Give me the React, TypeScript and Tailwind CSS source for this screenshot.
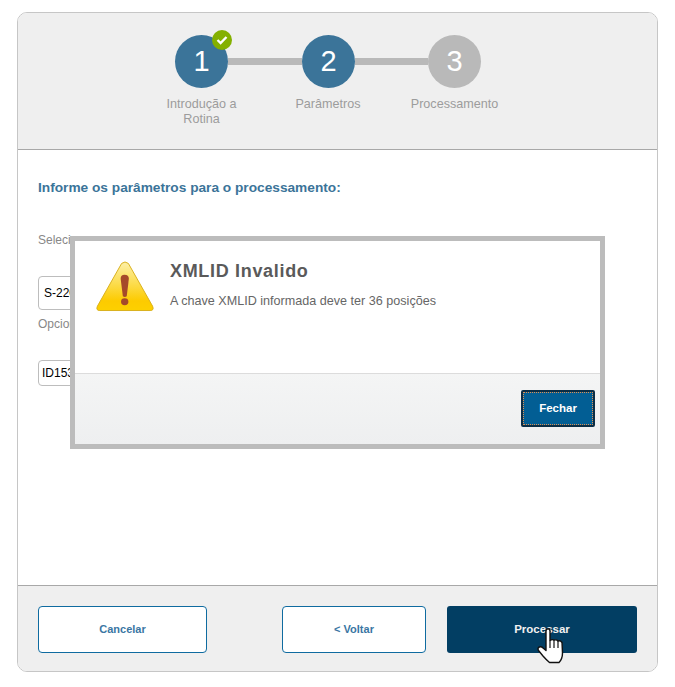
import React from "react";

const font = "font-['Liberation_Sans',Arial,sans-serif]";

function WarningIcon() {
  return (
    <svg width="58" height="51" viewBox="0 0 60 52" preserveAspectRatio="none">
      <defs>
        <linearGradient id="warn" x1="0" y1="0" x2="0" y2="1">
          <stop offset="0" stopColor="#fdf0a8" />
          <stop offset="0.45" stopColor="#fcdc4c" />
          <stop offset="0.8" stopColor="#fdcb00" />
          <stop offset="1" stopColor="#fdd000" />
        </linearGradient>
      </defs>
      <path
        d="M26.5 2.5 Q30 -0.5 33.5 2.5 L58.5 46 Q60.5 50.5 56 50.5 L4 50.5 Q-0.5 50.5 1.5 46 Z"
        fill="url(#warn)"
        stroke="#d9b01c"
        strokeWidth="1"
      />
      <path d="M25.5 18 Q25.5 14 29.5 14 Q34 14 34 18 L31.8 36 Q29.7 37.5 27.8 36 Z" fill="#a5492a" />
      <ellipse cx="29.7" cy="41.5" rx="3.8" ry="3.5" fill="#a5492a" />
    </svg>
  );
}

function HandCursor() {
  return (
    <svg width="30" height="36" viewBox="0 0 30 36">
      <path
        d="M9 3 Q9 0.8 11 0.8 Q13 0.8 13 3 L13 12.5 Q15.5 11 17 12.2 Q19.5 11.2 21 13 Q23.5 12.3 25 14.5 L25.5 25 Q25.5 31 22 34.5 L12.5 34.5 Q9.5 32 6 28 L1.5 22.5 Q0.2 20 2.3 19 Q4.3 18.3 6 20 L9 22.5 Z"
        fill="#fff"
        stroke="#111"
        strokeWidth="1.4"
        strokeLinejoin="round"
      />
      <path d="M13 12.5 L13 20 M17 12.2 L17 20 M21 13 L21 20" stroke="#111" strokeWidth="1.2" fill="none" />
    </svg>
  );
}

function Circle({ n, done, off }: { n: number; done?: boolean; off?: boolean }) {
  return (
    <div
      className={
        "relative flex h-[53px] w-[53px] shrink-0 items-center justify-center rounded-full text-[29px] text-white " +
        (off ? "bg-[#b9b9b9]" : "bg-[#3b7499]")
      }
    >
      {n}
      {done && (
        <div className="absolute right-[-4px] top-[-5px] flex h-[20px] w-[20px] items-center justify-center rounded-full bg-[#84b000]">
          <svg width="12" height="10" viewBox="0 0 12 10">
            <path d="M1.5 5 L4.6 8 L10.5 2" stroke="#fff" strokeWidth="2.4" fill="none" />
          </svg>
        </div>
      )}
    </div>
  );
}

function Footer() {
  return (
    <div className="relative flex h-[86px] border-t border-[#a8a8a8] bg-[#efefef] pl-[20px] pt-[20px]">
      <button className="h-[47px] w-[169px] rounded-[4px] border border-[#0f6ba0] bg-white text-[11px] font-bold text-[#3a76a3]">
        Cancelar
      </button>
      <button className="ml-[75px] h-[47px] w-[144px] rounded-[4px] border border-[#0f6ba0] bg-white text-[11px] font-bold text-[#3a76a3]">
        &lt; Voltar
      </button>
      <button className="ml-[21px] h-[47px] w-[190px] rounded-[3px] bg-[#023e63] text-[11.5px] font-bold text-[#f0f0f0]">
        Processar
      </button>
      <div className="absolute left-[519px] top-[42px]">
        <HandCursor />
      </div>
    </div>
  );
}

export default function App() {
  return (
    <div className={"relative h-[687px] w-[675px] bg-white pl-[17px] pt-[12px] " + font}>
      <div className="flex h-[660px] w-[641px] flex-col overflow-hidden rounded-[10px] border border-[#c6c6c6]">
        <div className="h-[137px] border-b border-[#a8a8a8] bg-[#efefef] pl-[120px] pt-[22px]">
          <div className="ml-[37px] flex items-center">
            <Circle n={1} done />
            <div className="h-[7px] w-[74px] bg-[#b9b9b9]" />
            <Circle n={2} />
            <div className="h-[7px] w-[73px] bg-[#b9b9b9]" />
            <Circle n={3} off />
          </div>
          <div className="mt-[9px] flex text-center text-[12.6px] leading-[15px] text-[#9c9c9c]">
            <div className="w-[127px]">
              Introdução a<br />
              Rotina
            </div>
            <div className="w-[126px]">Parâmetros</div>
            <div className="w-[127px]">Processamento</div>
          </div>
        </div>

        <div className="flex-1 bg-white px-[20px] pt-[30px]">
          <div className="text-[13.7px] font-bold leading-[16px] text-[#3b7499]">
            Informe os parâmetros para o processamento:
          </div>
          <div className="mt-[37px] text-[12px] leading-[14px] text-[#888]">Selecione</div>
          <div className="mt-[29px] flex h-[34px] w-[300px] items-center rounded-[4px] border border-[#bdbdbd] px-[5px] text-[12px] text-black">
            S-2200
          </div>
          <div className="mt-[7px] text-[12px] leading-[14px] text-[#888]">Opcional</div>
          <div className="mt-[29px] flex h-[26px] w-[300px] items-center rounded-[4px] border border-[#bdbdbd] px-[3px] text-[12px] text-black">
            ID1530
          </div>
        </div>

        <Footer />
      </div>

      {/* modal */}
      <div className="absolute left-[70px] top-[236px] flex h-[213px] w-[535px] flex-col border-[5px] border-[#bcbcbc] bg-white">
        <div className="flex h-[133px] border-b border-[#dcdcdc]">
          <div className="ml-[21px] mt-[20px]">
            <WarningIcon />
          </div>
          <div className="ml-[16px] pt-[20px]">
            <div className="text-[18px] font-bold leading-[20px] tracking-[0.68px] text-[#5a5a5a]">XMLID Invalido</div>
            <div className="mt-[13px] text-[12.6px] leading-[14px] text-[#666]">
              A chave XMLID informada deve ter 36 posições
            </div>
          </div>
        </div>
        <div className="flex flex-1 items-start justify-end bg-gradient-to-b from-[#f4f5f5] to-[#eeeff0] pr-[5px] pt-[16px]">
          <button className="h-[37px] w-[74px] rounded-[2px] border-2 border-[#0b2d45] bg-[#025e94] text-[11.5px] font-bold text-white outline-1 -outline-offset-3 outline-dotted outline-[#e09050]">
            Fechar
          </button>
        </div>
      </div>
    </div>
  );
}
